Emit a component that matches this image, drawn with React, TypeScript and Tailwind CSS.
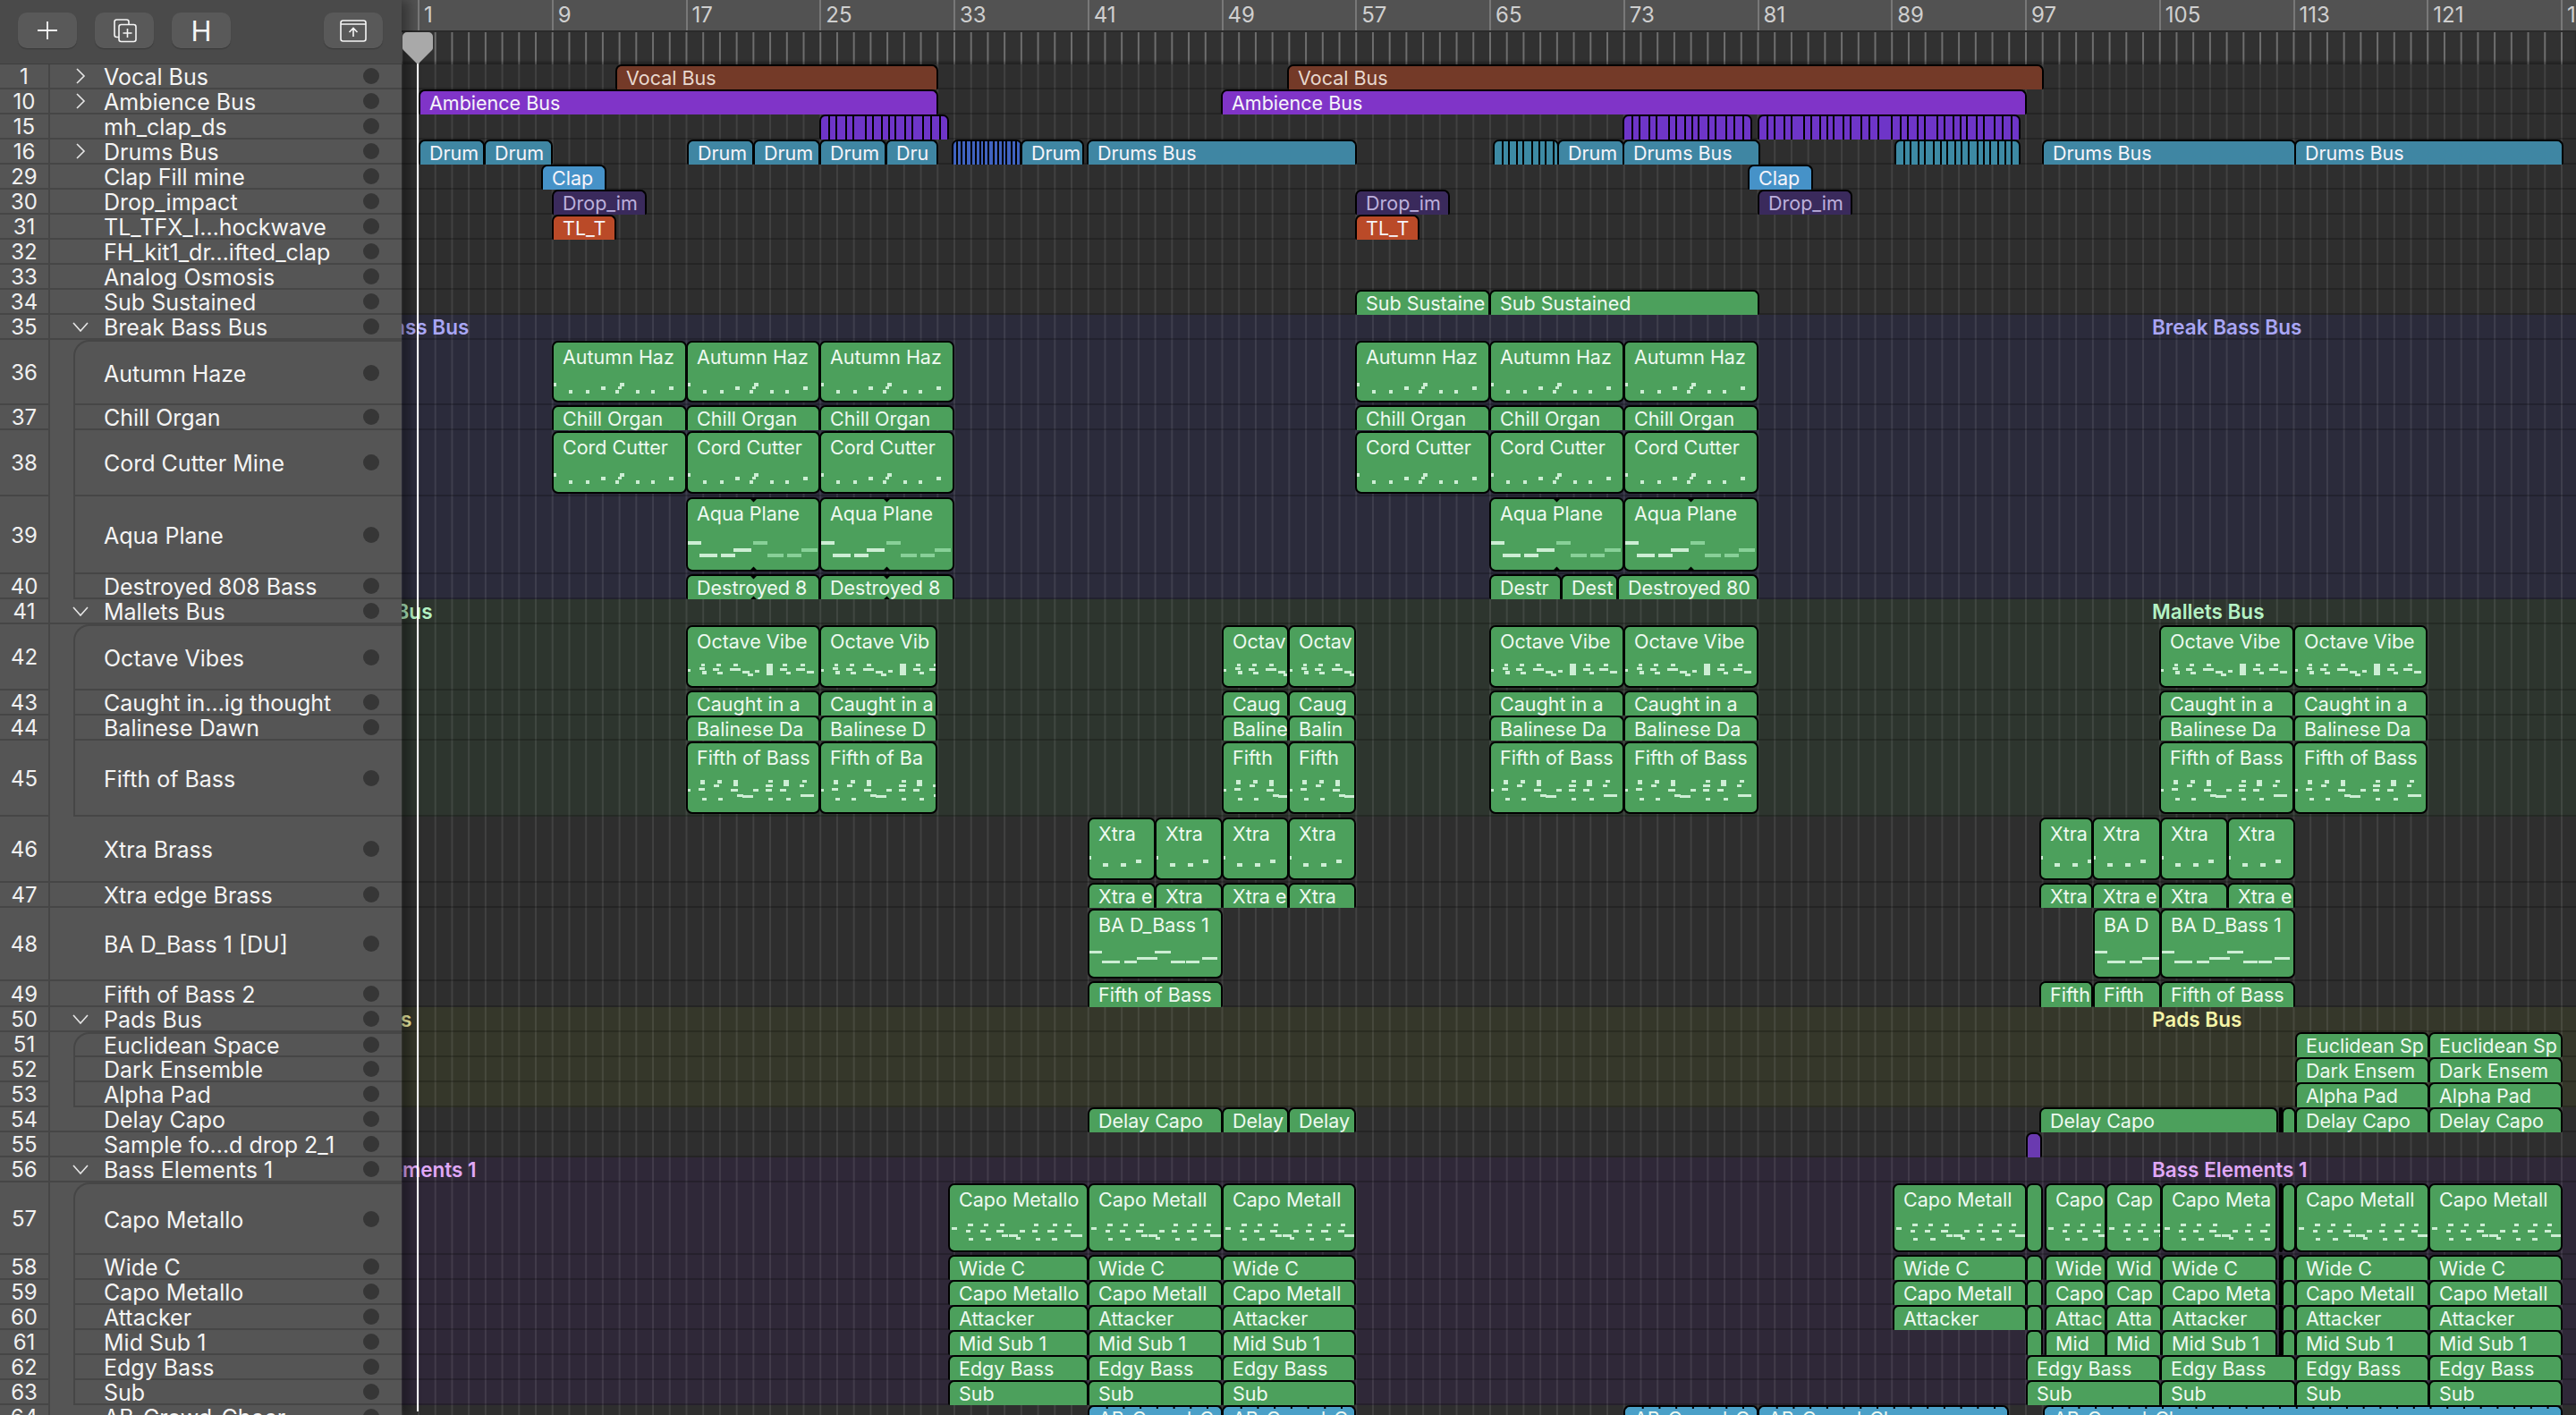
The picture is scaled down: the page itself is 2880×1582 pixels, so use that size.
import React from 'react';

type Note = [number, number, number, number, number?];
type Reg = { a: number; b: number; label?: string; color?: string; text?: string; notes?: Note[]; stripes?: number[]; notch?: boolean; ticks?: boolean };
type Track = { n: number; name: string; h: number; chev?: 'r' | 'd'; child?: 'first' | 'mid'; tint?: string; label?: string; labelColor?: string; labelLeft?: number; regs?: Reg[] };

const B = (bar: number) => Math.round(467 + (bar - 1) * 18.72);

const GREEN = '#4ca05c';
const DRUM = '#3f86a3';

const autumn: Note[] = [[2, 47, 3, 4], [19, 55, 4, 4], [38, 55, 4, 4], [55, 51, 5, 4], [71, 55, 4, 4], [76, 47, 5, 4], [74, 51, 4, 3], [94, 55, 4, 4], [111, 55, 4, 4], [131, 51, 5, 4]];
const aqua: Note[] = [[1, 49, 16, 4], [15, 63, 20, 4], [39, 63, 16, 4], [53, 57, 20, 4], [75, 49, 16, 4, 1], [91, 63, 18, 4, 1], [113, 63, 16, 4, 1], [129, 57, 18, 4, 1]];
const octave: Note[] = [[2, 49, 3, 3], [17, 43, 4, 3], [15, 47, 6, 3], [18, 51, 5, 4], [34, 43, 5, 3], [30, 48, 7, 3], [35, 52, 6, 3], [53, 43, 5, 3], [49, 48, 12, 3], [63, 51, 8, 3], [69, 54, 6, 3], [77, 50, 5, 3], [90, 43, 7, 13], [108, 43, 5, 3], [105, 48, 8, 3], [112, 52, 5, 3], [128, 43, 5, 3], [123, 48, 10, 3], [135, 51, 8, 3]];
const fifth: Note[] = [[2, 53, 3, 3], [16, 43, 5, 5], [14, 52, 7, 3], [18, 63, 5, 3], [35, 43, 5, 4], [31, 48, 6, 3], [36, 63, 5, 3], [53, 43, 5, 7], [50, 53, 8, 3], [57, 59, 7, 3], [63, 60, 12, 3], [75, 53, 6, 3], [92, 43, 5, 3], [89, 48, 8, 3], [89, 53, 7, 3], [92, 63, 5, 3], [109, 43, 6, 7], [105, 53, 7, 3], [112, 63, 5, 3], [130, 43, 5, 3], [127, 48, 5, 3], [128, 59, 15, 3]];
const capo: Note[] = [[4, 49, 6, 3], [22, 45, 6, 3], [20, 52, 5, 3], [23, 61, 5, 3], [40, 45, 5, 3], [36, 52, 6, 3], [42, 61, 6, 3], [58, 45, 5, 3], [54, 52, 8, 3], [60, 57, 7, 3], [68, 57, 10, 3], [76, 60, 5, 3], [80, 52, 6, 3], [96, 45, 5, 3], [94, 52, 6, 3], [98, 61, 5, 3], [117, 45, 5, 3], [111, 52, 8, 3], [116, 61, 6, 3], [133, 45, 5, 3], [130, 52, 7, 3], [137, 57, 13, 3]];
const xtra: Note[] = [[0, 43, 4, 4], [17, 51, 6, 4], [37, 51, 6, 4], [54, 47, 6, 4]];
const bad: Note[] = [[0, 47, 16, 3], [16, 58, 20, 3], [41, 58, 14, 3], [55, 54, 23, 3], [75, 47, 18, 3], [93, 58, 16, 3], [110, 58, 15, 3], [128, 54, 17, 3]];

const g = (a: number, b: number, label?: string, notes?: Note[], notch?: boolean): Reg => ({ a, b, label, notes, notch });
const mk = (cuts: number[], labels: string[], notes?: Note[], notch?: boolean) => labels.map((l, i) => g(cuts[i], cuts[i + 1], l, notes, notch));

const stripeA = [8, 6, 9, 6, 12, 6, 8, 6, 5, 9, 6, 10, 7, 8, 13];
const stripeB = [3, 3, 3, 4, 3, 3, 2, 3, 4, 3, 3, 2, 4, 3, 3, 2, 3, 3];
const stripeC = [8, 5, 7, 5, 8, 6, 5, 7, 5, 6, 8, 5, 5, 7, 6, 5, 7, 6, 8];

const v = (a: number, b: number, label: string, color: string, text = '#f6f4fa'): Reg => ({ a, b, label, color, text });

const bars9 = [B(9), B(17), B(25), B(33)];
const bars57 = [B(57), B(65), B(73), B(81)];
const bars17 = [B(17), B(25), B(33)];
const bars65 = [B(65), B(73), B(81)];
const m17 = [B(17), B(25), B(32)];
const m49 = [B(49), B(53), B(57)];
const m105 = [B(105), B(113), B(121)];
const x41 = [B(41), B(45), B(49), B(53), B(57)];
const x97 = [2280, 2339, 2415, 2490, 2565];
const c33 = [1060, B(41), B(49), B(57)];
const cR = [2286, 2354, 2416, 2545];
const cE = [2566, 2715, 2864];

const capoRow = (full: string, trimmed: string, a: string, b: string, c: string, d: string, notes?: Note[], withLeft = true): Reg[] => [
  ...mk(c33, [full, trimmed, trimmed], notes),
  ...(withLeft ? [g(2116, 2265, trimmed, notes)] : []),
  g(2265, 2283),
  ...mk(cR, [a, b, c], notes),
  g(2548, 2550),
  g(2551, 2566),
  ...mk(cE, [d, d], notes),
];

const tracks: Track[] = [
  { n: 1, name: 'Vocal Bus', h: 28, chev: 'r', regs: [v(688, 1048, 'Vocal Bus', '#743a28', '#e8d8ce'), v(1439, 2284, 'Vocal Bus', '#743a28', '#e8d8ce')] },
  { n: 10, name: 'Ambience Bus', h: 28, chev: 'r', regs: [v(468, 1048, 'Ambience Bus', '#8034c8'), v(1365, 2265, 'Ambience Bus', '#8034c8')] },
  { n: 15, name: 'mh_clap_ds', h: 28, regs: [{ a: 916, b: 1060, color: '#6e35c8', stripes: stripeA }, { a: 1814, b: 1958, color: '#6e35c8', stripes: stripeA }, { a: 1965, b: 2258, color: '#6e35c8', stripes: stripeA }] },
  {
    n: 16, name: 'Drums Bus', h: 28, chev: 'r', regs: [
      v(468, 541, 'Drum', DRUM), v(541, 617, 'Drum', DRUM), v(768, 842, 'Drum', DRUM), v(842, 916, 'Drum', DRUM), v(916, 990, 'Drum', DRUM), v(990, 1048, 'Dru', DRUM),
      { a: 1064, b: 1142, color: '#4063c0', stripes: stripeB }, v(1141, 1211, 'Drum', DRUM), v(1215, 1516, 'Drums Bus', DRUM),
      { a: 1669, b: 1742, color: '#3d8aa4', stripes: stripeC }, v(1741, 1815, 'Drum', DRUM), v(1814, 1967, 'Drums Bus', DRUM),
      { a: 2118, b: 2258, color: '#3d8aa4', stripes: stripeC }, v(2283, 2566, 'Drums Bus', DRUM), v(2565, 2865, 'Drums Bus', DRUM),
    ],
  },
  { n: 29, name: 'Clap Fill mine', h: 28, regs: [v(605, 677, 'Clap', '#4692c8'), v(1954, 2026, 'Clap', '#4692c8')] },
  { n: 30, name: 'Drop_impact', h: 28, regs: [v(617, 722, 'Drop_im', '#3a2a5c', '#bdb0dc'), v(1515, 1620, 'Drop_im', '#3a2a5c', '#bdb0dc'), v(1965, 2070, 'Drop_im', '#3a2a5c', '#bdb0dc')] },
  { n: 31, name: 'TL_TFX_I…hockwave', h: 28, regs: [v(617, 688, 'TL_T', '#ba4a28'), v(1515, 1586, 'TL_T', '#ba4a28')] },
  { n: 32, name: 'FH_kit1_dr…ifted_clap', h: 28 },
  { n: 33, name: 'Analog Osmosis', h: 28 },
  { n: 34, name: 'Sub Sustained', h: 28, regs: [g(1515, 1665, 'Sub Sustaine'), g(1665, 1966, 'Sub Sustained')] },
  { n: 35, name: 'Break Bass Bus', h: 28, chev: 'd', tint: '#2b2b3b', label: 'Break Bass Bus', labelColor: '#a9a6f5', labelLeft: 357 },
  { n: 36, name: 'Autumn Haze', h: 73, child: 'first', tint: '#2b2b3b', regs: [...mk(bars9, ['Autumn Haz', 'Autumn Haz', 'Autumn Haz'], autumn), ...mk(bars57, ['Autumn Haz', 'Autumn Haz', 'Autumn Haz'], autumn)] },
  { n: 37, name: 'Chill Organ', h: 28, child: 'mid', tint: '#2b2b3b', regs: [...mk(bars9, ['Chill Organ', 'Chill Organ', 'Chill Organ']), ...mk(bars57, ['Chill Organ', 'Chill Organ', 'Chill Organ'])] },
  { n: 38, name: 'Cord Cutter Mine', h: 74, child: 'mid', tint: '#2b2b3b', regs: [...mk(bars9, ['Cord Cutter', 'Cord Cutter', 'Cord Cutter'], autumn), ...mk(bars57, ['Cord Cutter', 'Cord Cutter', 'Cord Cutter'], autumn)] },
  { n: 39, name: 'Aqua Plane', h: 87, child: 'mid', tint: '#2b2b3b', regs: [...mk(bars17, ['Aqua Plane', 'Aqua Plane'], aqua, true), ...mk(bars65, ['Aqua Plane', 'Aqua Plane'], aqua, true)] },
  { n: 40, name: 'Destroyed 808 Bass', h: 28, child: 'mid', tint: '#2b2b3b', regs: [...mk(bars17, ['Destroyed 8', 'Destroyed 8'], undefined, true), g(B(65), 1745, 'Destr'), g(1745, 1808, 'Dest'), g(1808, B(81), 'Destroyed 80')] },
  { n: 41, name: 'Mallets Bus', h: 28, chev: 'd', tint: '#2d352e', label: 'Mallets Bus', labelColor: '#b4f2c4', labelLeft: 358 },
  { n: 42, name: 'Octave Vibes', h: 74, child: 'first', tint: '#2d352e', regs: [...mk(m17, ['Octave Vibe', 'Octave Vib'], octave), ...mk(m49, ['Octav', 'Octav'], octave), ...mk(bars65, ['Octave Vibe', 'Octave Vibe'], octave), ...mk(m105, ['Octave Vibe', 'Octave Vibe'], octave)] },
  { n: 43, name: 'Caught in…ig thought', h: 28, child: 'mid', tint: '#2d352e', regs: [...mk(m17, ['Caught in a', 'Caught in a']), ...mk(m49, ['Caug', 'Caug']), ...mk(bars65, ['Caught in a', 'Caught in a']), ...mk(m105, ['Caught in a', 'Caught in a'])] },
  { n: 44, name: 'Balinese Dawn', h: 28, child: 'mid', tint: '#2d352e', regs: [...mk(m17, ['Balinese Da', 'Balinese D']), ...mk(m49, ['Baline', 'Balin']), ...mk(bars65, ['Balinese Da', 'Balinese Da']), ...mk(m105, ['Balinese Da', 'Balinese Da'])] },
  { n: 45, name: 'Fifth of Bass', h: 85, child: 'mid', tint: '#2d352e', regs: [...mk(m17, ['Fifth of Bass', 'Fifth of Ba'], fifth), ...mk(m49, ['Fifth', 'Fifth'], fifth), ...mk(bars65, ['Fifth of Bass', 'Fifth of Bass'], fifth), ...mk(m105, ['Fifth of Bass', 'Fifth of Bass'], fifth)] },
  { n: 46, name: 'Xtra Brass', h: 74, regs: [...mk(x41, ['Xtra', 'Xtra', 'Xtra', 'Xtra'], xtra), ...mk(x97, ['Xtra', 'Xtra', 'Xtra', 'Xtra'], xtra)] },
  { n: 47, name: 'Xtra edge Brass', h: 28, regs: [...mk(x41, ['Xtra e', 'Xtra', 'Xtra e', 'Xtra']), ...mk(x97, ['Xtra', 'Xtra e', 'Xtra', 'Xtra e'])] },
  { n: 48, name: 'BA D_Bass 1 [DU]', h: 82, regs: [g(B(41), B(49), 'BA D_Bass 1', bad), g(2340, 2415, 'BA D', bad), g(2415, 2565, 'BA D_Bass 1', bad)] },
  { n: 49, name: 'Fifth of Bass 2', h: 29, regs: [g(B(41), B(49), 'Fifth of Bass'), g(2280, 2339, 'Fifth'), g(2340, 2415, 'Fifth'), g(2415, 2565, 'Fifth of Bass')] },
  { n: 50, name: 'Pads Bus', h: 28, chev: 'd', tint: '#35372a', label: 'Pads Bus', labelColor: '#f4f4a8', labelLeft: 360 },
  { n: 51, name: 'Euclidean Space', h: 28, child: 'first', tint: '#35372a', regs: mk(cE, ['Euclidean Sp', 'Euclidean Sp']) },
  { n: 52, name: 'Dark Ensemble', h: 28, child: 'mid', tint: '#35372a', regs: mk(cE, ['Dark Ensem', 'Dark Ensem']) },
  { n: 53, name: 'Alpha Pad', h: 28, child: 'mid', tint: '#35372a', regs: mk(cE, ['Alpha Pad', 'Alpha Pad']) },
  { n: 54, name: 'Delay Capo', h: 28, regs: [g(B(41), B(49), 'Delay Capo'), g(B(49), B(53), 'Delay'), g(B(53), B(57), 'Delay'), g(2280, 2546, 'Delay Capo'), g(2548, 2550), g(2551, 2566), ...mk(cE, ['Delay Capo', 'Delay Capo'])] },
  { n: 55, name: 'Sample fo…d drop 2_1', h: 28, regs: [{ a: 2265, b: 2282, color: '#6a3ab0' }] },
  { n: 56, name: 'Bass Elements 1', h: 28, chev: 'd', tint: '#2f2838', label: 'Bass Elements 1', labelColor: '#e0a8f8', labelLeft: 359 },
  { n: 57, name: 'Capo Metallo', h: 81, child: 'first', tint: '#2f2838', regs: capoRow('Capo Metallo', 'Capo Metall', 'Capo', 'Cap', 'Capo Meta', 'Capo Metall', capo) },
  { n: 58, name: 'Wide C', h: 28, child: 'mid', tint: '#2f2838', regs: capoRow('Wide C', 'Wide C', 'Wide', 'Wid', 'Wide C', 'Wide C') },
  { n: 59, name: 'Capo Metallo', h: 28, child: 'mid', tint: '#2f2838', regs: capoRow('Capo Metallo', 'Capo Metall', 'Capo', 'Cap', 'Capo Meta', 'Capo Metall') },
  { n: 60, name: 'Attacker', h: 28, child: 'mid', tint: '#2f2838', regs: capoRow('Attacker', 'Attacker', 'Attac', 'Atta', 'Attacker', 'Attacker') },
  { n: 61, name: 'Mid Sub 1', h: 28, child: 'mid', tint: '#2f2838', regs: capoRow('Mid Sub 1', 'Mid Sub 1', 'Mid', 'Mid', 'Mid Sub 1', 'Mid Sub 1', undefined, false) },
  { n: 62, name: 'Edgy Bass', h: 28, child: 'mid', tint: '#2f2838', regs: [...mk(c33, ['Edgy Bass', 'Edgy Bass', 'Edgy Bass']), g(2265, 2415, 'Edgy Bass'), g(2415, 2566, 'Edgy Bass'), ...mk(cE, ['Edgy Bass', 'Edgy Bass'])] },
  { n: 63, name: 'Sub', h: 28, child: 'mid', tint: '#2f2838', regs: [...mk(c33, ['Sub', 'Sub', 'Sub']), g(2265, 2415, 'Sub'), g(2415, 2566, 'Sub'), ...mk(cE, ['Sub', 'Sub'])] },
  {
    n: 64, name: 'AB_Crowd_Cheer', h: 28, regs: [
      { a: B(41), b: B(49), label: 'AB_Crowd_C', color: '#4aa0c8', ticks: true }, { a: B(49), b: B(57), label: 'AB_Crowd_C', color: '#4aa0c8', ticks: true },
      { a: 1815, b: 1965, label: 'AB_Crowd_C', color: '#4aa0c8', ticks: true }, { a: 1965, b: 2245, label: 'AB_Crowd_Cheer ∞', color: '#4aa0c8', ticks: true },
      { a: 2284, b: 2864, label: 'AB_Crowd_Cheer ∞', color: '#4aa0c8', ticks: true },
    ],
  },
];

const rulerBars = [1, 9, 17, 25, 33, 41, 49, 57, 65, 73, 81, 89, 97, 105, 113, 121, 129];

function Chevron({ dir }: { dir: 'r' | 'd' }) {
  return dir === 'r' ? (
    <svg width="12" height="18" viewBox="0 0 12 18" fill="none" stroke="#e6e6e6" strokeWidth="1.6"><path d="M2 1l8 8-8 8" /></svg>
  ) : (
    <svg width="18" height="11" viewBox="0 0 18 11" fill="none" stroke="#e6e6e6" strokeWidth="1.6"><path d="M1 1l8 9 8-9" /></svg>
  );
}

function ToolButton({ children }: { children: React.ReactNode }) {
  return (
    <button className="flex h-[40px] w-[66px] items-center justify-center rounded-[10px] bg-[#595959] text-[#f5f5f5] shadow-[0_1px_1px_rgba(0,0,0,0.25)]">
      {children}
    </button>
  );
}

function SideRow({ t }: { t: Track }) {
  return (
    <div className="flex flex-none overflow-hidden bg-[#555555]" style={{ height: t.h }}>
      <div className="flex w-[54px] flex-none items-center justify-center border-b-2 border-[#464646] text-[24px] leading-[26px] text-[#f0f0f0]"><span className="mt-[2px]">{t.n}</span></div>
      <div className="w-[2px] flex-none bg-[#464646]" />
      {t.child ? (
        <div className={`ml-[26px] flex min-w-0 flex-1 items-center border-b-2 border-l-2 border-[#464646] pl-[32px] pr-[25px] ${t.child === 'first' ? 'rounded-tl-[18px] border-t-2' : ''}`}>
          <span className="mt-[2px] flex-1 whitespace-nowrap text-[25px] leading-[26px] text-[#f4f4f4]">{t.name}</span>
          <span className="h-[18px] w-[18px] flex-none rounded-full bg-[#363636]" />
        </div>
      ) : (
        <div className="relative flex min-w-0 flex-1 items-center border-b-2 border-[#464646] pl-[60px] pr-[25px]">
          {t.chev && <span className="absolute left-[25px] flex w-[18px] justify-center"><Chevron dir={t.chev} /></span>}
          <span className="mt-[2px] flex-1 whitespace-nowrap text-[25px] leading-[26px] text-[#f4f4f4]">{t.name}</span>
          <span className="h-[18px] w-[18px] flex-none rounded-full bg-[#363636]" />
        </div>
      )}
    </div>
  );
}

function Region({ r, h }: { r: Reg; h: number }) {
  const tall = h > 40;
  const color = r.color ?? GREEN;
  const text = r.text ?? '#eef9f0';
  return (
    <div
      className={`absolute overflow-hidden border-2 border-black ${tall ? 'rounded-[7px] pt-[4px]' : 'rounded-t-[7px] rounded-b-[2px] border-b-0 pt-[1px]'}`}
      style={{ left: r.a - 449, width: r.b - r.a + 1, top: tall ? 1 : 0, height: tall ? h - 4 : h, backgroundColor: color }}
    >
      {r.label && (
        <span className="block whitespace-nowrap pl-[10px] text-[21.5px] leading-[24px]" style={{ color: text }}>{r.label}</span>
      )}
      {r.stripes && (
        <div className="absolute inset-0 flex gap-[2px] bg-black">
          {Array.from({ length: 60 }).map((_, i) => (
            <div key={i} className="h-full flex-none" style={{ width: r.stripes![i % r.stripes!.length], backgroundColor: color }} />
          ))}
        </div>
      )}
      {r.notes && (
        <svg className="absolute left-0 top-0" width={r.b - r.a} height={h}>
          {r.notes.map((n, i) => (
            <rect key={i} x={n[0] - 2} y={n[1] - 2} width={n[2]} height={n[3]} fill={n[4] ? '#88d098' : '#cdeed4'} />
          ))}
        </svg>
      )}
      {r.notch && (
        <>
          <span className="absolute left-[70px] top-[-5px] h-[7px] w-[7px] rotate-45 bg-black" />
          <span className="absolute bottom-[-5px] left-[70px] h-[7px] w-[7px] rotate-45 bg-black" />
        </>
      )}
      {r.ticks && <span className="absolute left-0 right-0 top-0 h-[2px] bg-[linear-gradient(90deg,#000_2px,transparent_2px)] bg-[length:18.72px_2px]" />}
    </div>
  );
}

function TimeRow({ t }: { t: Track }) {
  return (
    <div
      className="relative flex-none border-b-2 border-black/20 bg-[linear-gradient(90deg,rgba(255,255,255,0.09)_2px,transparent_2px)] bg-[length:18.72px_100%] bg-[position:18px_0]"
      style={{ height: t.h, backgroundColor: t.tint ?? '#2e2e2e' }}
    >
      {t.label && (
        <>
          <span className="absolute top-0 whitespace-nowrap text-[22.5px] font-semibold leading-[28px]" style={{ left: t.labelLeft! - 449, color: t.labelColor }}>{t.label}</span>
          <span className="absolute left-[1957px] top-0 whitespace-nowrap text-[22.5px] font-semibold leading-[28px]" style={{ color: t.labelColor }}>{t.label}</span>
        </>
      )}
      {t.regs?.map((r, i) => <Region key={i} r={r} h={t.h} />)}
    </div>
  );
}

export default function App() {
  return (
    <div className="relative flex h-[1582px] w-[2880px] overflow-hidden bg-[#2e2e2e] font-['Inter',sans-serif]">
      <aside className="relative z-20 flex w-[449px] flex-none flex-col shadow-[8px_0_12px_rgba(0,0,0,0.35)]">
        <div className="flex h-[72px] flex-none items-center gap-[20px] border-b border-[#3e3e3e] bg-[#4a4a4a] pb-[3px] pl-[20px] pr-[21px]">
          <ToolButton>
            <svg width="24" height="24" viewBox="0 0 24 24" fill="none" stroke="currentColor" strokeWidth="1.8"><path d="M12 2v20M1 12h22" /></svg>
          </ToolButton>
          <ToolButton>
            <svg width="30" height="30" viewBox="0 0 30 30" fill="none" stroke="currentColor" strokeWidth="1.6">
              <path d="M9 22.5H6.5a2.5 2.5 0 0 1-2.5-2.5V5.5A2.5 2.5 0 0 1 6.5 3h11A2.5 2.5 0 0 1 20 5.5V8" />
              <rect x="9" y="8.5" width="19" height="19" rx="2.5" />
              <path d="M18.5 13v10M13.5 18h10" />
            </svg>
          </ToolButton>
          <ToolButton>
            <span className="text-[31px] leading-none font-normal">H</span>
          </ToolButton>
          <div className="ml-auto">
            <ToolButton>
              <svg width="30" height="25" viewBox="0 0 30 25" fill="none" stroke="currentColor" strokeWidth="1.6">
                <rect x="1" y="1" width="28" height="23" rx="2.5" />
                <path d="M1 5h28M15 19v-9M10.5 14l4.5-4.5 4.5 4.5" />
              </svg>
            </ToolButton>
          </div>
        </div>
        {tracks.map((t) => <SideRow key={t.n} t={t} />)}
      </aside>

      <main className="relative flex min-w-0 flex-1 flex-col">
        <div className="h-[72px] flex-none">
          <div className="flex h-[34px] bg-[#525252] pl-[18px]">
            {rulerBars.map((b) => (
              <div key={b} className="w-[149.76px] flex-none border-l-2 border-[#787878] pl-[5px] text-[24px] leading-[34px] text-[#cfcfcf]">{b}</div>
            ))}
          </div>
          <div className="h-[2px] bg-[#2a2a2a]" />
          <div className="h-[36px] bg-[#313131] bg-[linear-gradient(90deg,#6e6e6e_2px,transparent_2px)] bg-[length:18.72px_100%] bg-[position:18px_0] shadow-[inset_0_-3px_3px_rgba(0,0,0,0.3)]" />
        </div>
        {tracks.map((t) => <TimeRow key={t.n} t={t} />)}
      </main>

      <div className="absolute left-[466px] top-[70px] z-30 h-[1508px] w-[2px] bg-white" />
      <svg className="absolute left-[450px] top-[36px] z-30" width="34" height="36" viewBox="0 0 34 36">
        <path d="M5 0h24a5 5 0 0 1 5 5v13a3 3 0 0 1-1 2L17 36 1 20a3 3 0 0 1-1-2V5a5 5 0 0 1 5-5z" fill="#a9a9a9" />
      </svg>
    </div>
  );
}
